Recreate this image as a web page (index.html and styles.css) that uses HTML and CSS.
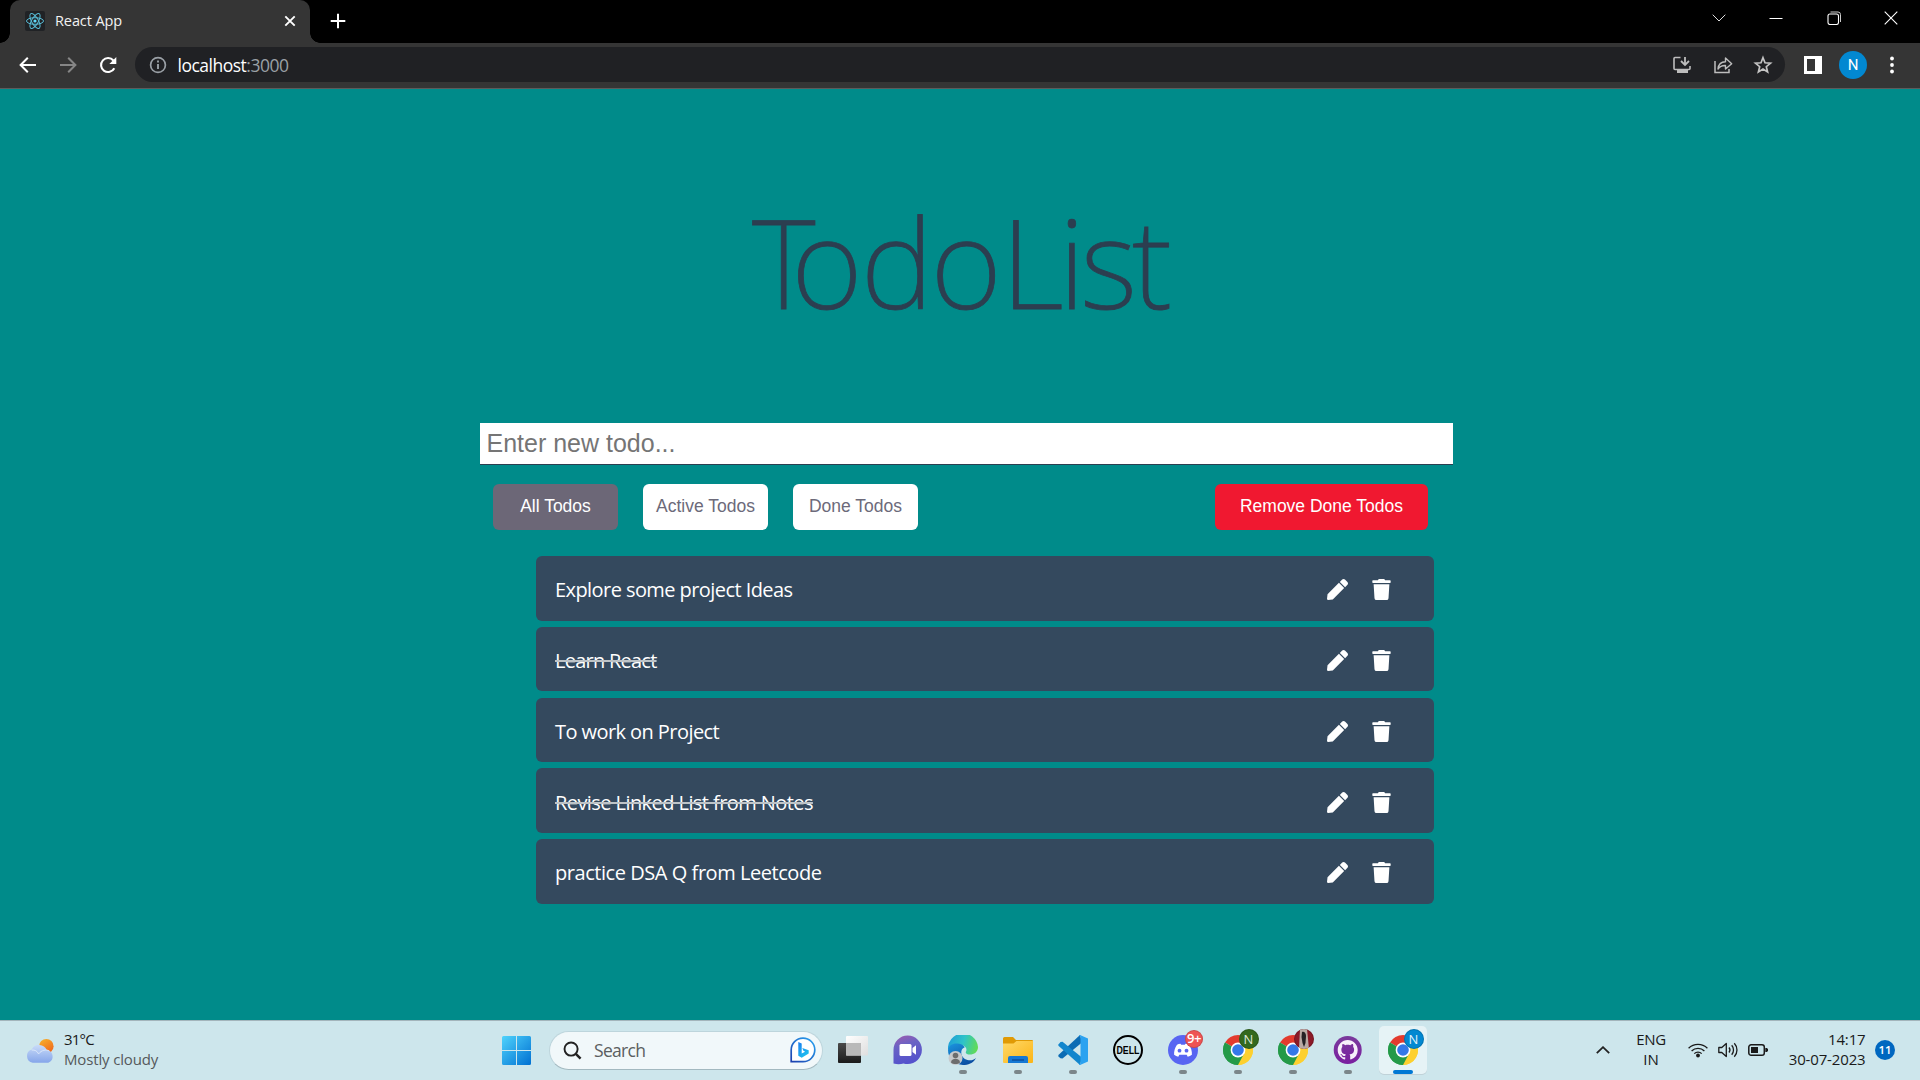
FILE: index.html
```html
<!DOCTYPE html>
<html lang="en">
<head>
<meta charset="utf-8">
<title>React App</title>
<link rel="stylesheet" href="styles.css">
</head>
<body>
<svg width="0" height="0" class="defs" aria-hidden="true">
  <defs>
    <linearGradient id="win" x1="0" y1="0" x2="1" y2="1"><stop offset="0" stop-color="#4fd3fc"/><stop offset="1" stop-color="#0070d2"/></linearGradient>
    <linearGradient id="bing" x1="0" y1="1" x2="1" y2="0"><stop offset="0" stop-color="#1b3fae"/><stop offset="1" stop-color="#2aa5f2"/></linearGradient>
    <linearGradient id="bingb" x1="0" y1="0" x2="0.6" y2="1"><stop offset="0" stop-color="#1b7df0"/><stop offset="1" stop-color="#1ec0ef"/></linearGradient>
    <linearGradient id="sun" x1="0" y1="0" x2="0.6" y2="1"><stop offset="0" stop-color="#f7b52c"/><stop offset="1" stop-color="#f06a1c"/></linearGradient>
    <linearGradient id="cloud" x1="0" y1="0" x2="0" y2="1"><stop offset="0" stop-color="#c9dbf8"/><stop offset="1" stop-color="#86a6ea"/></linearGradient>
    <linearGradient id="meet" x1="0" y1="0" x2="0.3" y2="1"><stop offset="0" stop-color="#a05cae"/><stop offset="0.4" stop-color="#6a62c4"/><stop offset="1" stop-color="#5552cc"/></linearGradient>
    <linearGradient id="edgeA" x1="0" y1="0.4" x2="1" y2="0.6"><stop offset="0" stop-color="#1e9fd8"/><stop offset="0.5" stop-color="#2fc3c8"/><stop offset="1" stop-color="#62dc52"/></linearGradient>
    <linearGradient id="edgeB" x1="0" y1="0" x2="0.6" y2="1"><stop offset="0" stop-color="#1b95df"/><stop offset="1" stop-color="#0c4fa3"/></linearGradient>
    <linearGradient id="folder" x1="0" y1="0" x2="1" y2="1"><stop offset="0" stop-color="#ffd968"/><stop offset="1" stop-color="#fbb416"/></linearGradient>
    <linearGradient id="dark" x1="0" y1="0" x2="0" y2="1"><stop offset="0" stop-color="#4a4a4a"/><stop offset="1" stop-color="#1b1b1b"/></linearGradient>
    <linearGradient id="pale" x1="0" y1="0" x2="1" y2="1"><stop offset="0" stop-color="#ffffff"/><stop offset="1" stop-color="#dedede"/></linearGradient>
    <linearGradient id="gh" x1="0" y1="0" x2="0" y2="1"><stop offset="0" stop-color="#7a3a9c"/><stop offset="1" stop-color="#7a1fa0"/></linearGradient>
    <symbol id="pen" viewBox="0 0 512 512"><path d="M290.74 93.24l128.02 128.02-277.99 277.99-114.14 12.6C11.35 513.54-1.56 500.62.14 485.34l12.7-114.22 277.9-277.88zm207.2-19.06l-60.11-60.11c-18.75-18.75-49.16-18.75-67.91 0l-56.55 56.55 128.02 128.02 56.55-56.55c18.75-18.76 18.75-49.16 0-67.91z"/></symbol>
    <symbol id="trash" viewBox="0 0 448 512"><path d="M432 32H312l-9.4-18.7A24 24 0 0 0 281.1 0H166.8a23.72 23.72 0 0 0-21.4 13.3L136 32H16A16 16 0 0 0 0 48v32a16 16 0 0 0 16 16h416a16 16 0 0 0 16-16V48a16 16 0 0 0-16-16zM53.2 467a48 48 0 0 0 47.9 45h245.8a48 48 0 0 0 47.9-45L416 128H32z"/></symbol>
    <symbol id="chrome" viewBox="0 0 30 30">
      <path d="M15 15L2.01 7.5A15 15 0 0 1 27.99 7.5Z" fill="#e33b2e"/>
      <path d="M15 15L27.99 7.5A15 15 0 0 1 15 30L15 15Z" fill="#fdd02f"/>
      <path d="M15 15L15 30A15 15 0 0 1 2.01 7.5Z" fill="#249a48"/>
      <path d="M15 8H28.3A15 15 0 0 1 15 30L21.1 18.5Z" fill="#fdd02f"/>
      <path d="M2.01 7.5L8.9 18.5L15 22L21.1 18.5L15 30A15 15 0 0 1 2.01 7.5Z" fill="#249a48"/>
      <circle cx="15" cy="15" r="7.4" fill="#fff"/><circle cx="15" cy="15" r="5.8" fill="#3478e8"/>
    </symbol>
  </defs>
</svg>

<div class="screen">
  <header class="tabstrip">
    <div class="tab">
      <svg class="favicon" viewBox="0 0 20 20"><rect width="20" height="20" rx="2" fill="#202225"/><g fill="none" stroke="#58bcd6" stroke-width="1"><ellipse cx="10" cy="10" rx="8.5" ry="3.3"/><ellipse cx="10" cy="10" rx="8.5" ry="3.3" transform="rotate(60 10 10)"/><ellipse cx="10" cy="10" rx="8.5" ry="3.3" transform="rotate(120 10 10)"/></g><circle cx="10" cy="10" r="1.6" fill="#61dafb"/></svg>
      <span class="tab-title">React App</span>
      <svg class="tab-close" viewBox="0 0 12 12"><path d="M1.3 1.3l9.4 9.4M10.7 1.3L1.3 10.7" stroke="#fff" stroke-width="1.9"/></svg>
    </div>
    <svg class="new-tab" viewBox="0 0 16 16"><path d="M8 .7v14.6M.7 8h14.6" stroke="#fff" stroke-width="2"/></svg>
    <div class="window-controls">
      <svg viewBox="0 0 14 14"><path d="M.7 3.7L7 10l6.300-6.300" fill="none" stroke="#ddd" stroke-width="1"/></svg>
      <svg viewBox="0 0 14 14"><path d="M.5 7.500h13" stroke="#fff"/></svg>
      <svg viewBox="0 0 14 14"><rect x="1" y="3" width="10.500" height="10.500" rx="2" fill="none" stroke="#fff" stroke-width="1.100"/><path d="M3.500 1h7.500a2.500 2.500 0 0 1 2.500 2.500V11" fill="none" stroke="#ccc"/></svg>
      <svg viewBox="0 0 14 14"><path d="M.7 .7l12.600 12.600M13.300 .7L.7 13.300" stroke="#fff" stroke-width="1.100"/></svg>
    </div>
  </header>

  <nav class="toolbar">
    <div class="nav-buttons">
      <svg viewBox="0 0 20 20"><path d="M18 10H3M9.800 2.800L2.600 10l7.200 7.200" fill="none" stroke="#fff" stroke-width="2"/></svg>
      <svg viewBox="0 0 20 20"><path d="M2 10h15M10.200 2.800l7.200 7.200-7.200 7.200" fill="none" stroke="#868686" stroke-width="2"/></svg>
      <svg viewBox="0 0 20 20"><path d="M16.300 13.200A7 7 0 1 1 15.400 5.500" fill="none" stroke="#fff" stroke-width="2.100"/><path d="M18.300 2v7h-7z" fill="#fff"/></svg>
    </div>
    <div class="omnibox">
      <svg class="info" viewBox="0 0 18 18"><circle cx="9" cy="9" r="7.400" fill="none" stroke="#9aa0a6" stroke-width="1.700"/><path d="M9 8v5M9 4.600v1.900" stroke="#9aa0a6" stroke-width="1.900"/></svg>
      <span class="url">localhost<span class="port">:3000</span></span>
      <div class="omni-actions">
        <svg viewBox="0 0 20 20"><path d="M8.500 2.500H3a1 1 0 0 0-1 1v10a1 1 0 0 0 1 1h14a1 1 0 0 0 1-1V11" fill="none" stroke="#bdbdbd" stroke-width="1.600"/><path d="M5 14.500h11V18H5z" fill="#bdbdbd"/><path d="M13 2v7.500M9 6l4 4 4-4" fill="none" stroke="#bdbdbd" stroke-width="1.800"/></svg>
        <svg viewBox="0 0 20 20"><path d="M2 6v11.500h14V14" fill="none" stroke="#bdbdbd" stroke-width="1.500"/><path d="M5 14c.4-4.500 2.800-7 7.500-7.200V3l6.200 5.700-6.200 5.300v-3.500C9 10.300 6.800 11.500 5 14z" fill="none" stroke="#bdbdbd" stroke-width="1.400" stroke-linejoin="round"/></svg>
        <svg viewBox="0 0 20 20"><path d="M10 2.700l2 5.100 5.500.4-4.200 3.500 1.300 5.300L10 14.100 5.400 17l1.300-5.300-4.200-3.500 5.500-.4z" fill="none" stroke="#c4c4c4" stroke-width="1.700"/></svg>
      </div>
    </div>
    <svg class="side-panel" viewBox="0 0 18 18"><path fill-rule="evenodd" d="M0 0h18v18H0zM3 3v12h8V3z" fill="#fff"/></svg>
    <div class="profile">N</div>
    <svg class="menu" viewBox="0 0 4 18"><circle cx="2" cy="2.500" r="1.900" fill="#fff"/><circle cx="2" cy="9" r="1.900" fill="#fff"/><circle cx="2" cy="15.500" r="1.900" fill="#fff"/></svg>
  </nav>

  <main class="app">
    <h1 class="title"><span class="kern-t">T</span><span class="kern-o">o</span><span class="kern-d">d</span><span class="kern-o2">o</span>List</h1>
    <input class="new-todo" type="text" placeholder="Enter new todo...">
    <div class="filters">
      <button class="filter filter-on">All Todos</button>
      <button class="filter">Active Todos</button>
      <button class="filter">Done Todos</button>
      <button class="remove">Remove Done Todos</button>
    </div>
    <ul class="todos">
      <li class="todo"><span class="label">Explore some project Ideas</span><svg class="pen"><use href="#pen"/></svg><svg class="trash"><use href="#trash"/></svg></li>
      <li class="todo"><span class="label label-tight done">Learn React</span><svg class="pen"><use href="#pen"/></svg><svg class="trash"><use href="#trash"/></svg></li>
      <li class="todo"><span class="label">To work on Project</span><svg class="pen"><use href="#pen"/></svg><svg class="trash"><use href="#trash"/></svg></li>
      <li class="todo"><span class="label done">Revise Linked List from Notes</span><svg class="pen"><use href="#pen"/></svg><svg class="trash"><use href="#trash"/></svg></li>
      <li class="todo"><span class="label label-wide">practice DSA Q from Leetcode</span><svg class="pen"><use href="#pen"/></svg><svg class="trash"><use href="#trash"/></svg></li>
    </ul>
  </main>

  <footer class="taskbar">
    <div class="weather">
      <svg viewBox="0 0 32 26"><circle cx="22" cy="8" r="7.500" fill="url(#sun)"/><path d="M8 25a7 7 0 0 1-1-13.600A8.500 8.500 0 0 1 22.500 12 6.700 6.700 0 0 1 24 25z" fill="url(#cloud)"/><path d="M7 12a7 7 0 0 1 7 4M14 16c3-4 8-5 11-3" fill="none" stroke="#dbe7fb" stroke-width="1"/></svg>
      <div class="weather-text"><span class="temp">31°C</span><span class="sky">Mostly cloudy</span></div>
    </div>
    <svg class="start" viewBox="0 0 29 29"><path d="M1.500 0H14v14H0V1.500A1.500 1.500 0 0 1 1.500 0zM15 0h12.500A1.500 1.500 0 0 1 29 1.500V14H15zM0 15h14v14H1.500A1.500 1.500 0 0 1 0 27.500zM15 15h14v12.500a1.500 1.500 0 0 1-1.500 1.500H15z" fill="url(#win)"/></svg>
    <div class="search">
      <svg class="glass" viewBox="0 0 20 20"><circle cx="8.500" cy="8.500" r="6.900" fill="none" stroke="#222" stroke-width="2"/><path d="M13.500 13.500l5 5" stroke="#222" stroke-width="2.600"/></svg>
      <span class="search-text">Search</span>
      <svg class="bing" viewBox="0 0 26 26"><path d="M1.200 24.700V13A11.800 11.800 0 1 1 13 24.700z" fill="#fff" stroke="url(#bing)" stroke-width="1.700"/><path d="M8.300 5l3.400 1.400v10.200l3.400-1.900-1.700-.9-1.100-2.800 6.400 2.300v3.200l-7 4.300-3.400-2z" fill="url(#bingb)"/></svg>
    </div>
    <div class="apps">
      <div class="slot"><svg viewBox="0 0 30 30"><rect x="0" y="8" width="23" height="20" rx="1" fill="url(#dark)"/><rect x="8" y="1" width="22" height="19.500" rx="1" fill="url(#pale)"/><rect x="8" y="8" width="15" height="12.500" fill="#b9b9b9"/></svg></div>
      <div class="slot"><svg viewBox="0 0 30 30"><path d="M.5 28.500V15A14.200 14.200 0 1 1 14.500 29a14 14 0 0 1-4-.6c-3 .9-6 1-10 .1z" fill="url(#meet)"/><rect x="6.500" y="9" width="12" height="12" rx="1.500" fill="#fff"/><path d="M19.500 13l3.500-2.800v9.600L19.500 17z" fill="#fff"/></svg></div>
      <div class="slot running"><svg viewBox="0 0 30 30"><path d="M0 15A15 15 0 0 1 30 12c0 5-4 7.500-8 7.500-3 0-5-1.200-4-3 1.500-3-1-6-5-6.500C7 9.500 3 12 0 15z" fill="url(#edgeA)"/><path d="M0 15c1-5 5-7 9.500-6.500C15 9 17 12 16.500 12.500c-4.500 1-5 10.500 3 12.500 3 .8 6 .2 8.500-2C25 28.500 20 30 15 30A15 15 0 0 1 0 15z" fill="url(#edgeB)"/><circle cx="7.500" cy="23" r="7" fill="#c6c9cc"/><circle cx="7.500" cy="20.500" r="2.800" fill="#6d6d6d"/><path d="M3 27.500c0-5 9-5 9 0-2 2-7 2-9 0z" fill="#6d6d6d"/></svg></div>
      <div class="slot running"><svg viewBox="0 0 30 30"><path d="M0 3.500A1.500 1.500 0 0 1 1.500 2H10l3 3h16a1 1 0 0 1 1 1v5H0z" fill="#e09a05"/><path d="M0 8.500h10.500L13.500 6H30v21a1 1 0 0 1-1 1H1a1 1 0 0 1-1-1z" fill="url(#folder)"/><path d="M5 28v-5a2 2 0 0 1 2-2h16a2 2 0 0 1 2 2v5z" fill="#1578d4"/><path d="M9 25h12" stroke="#0b4a94" stroke-width="1.300"/></svg></div>
      <div class="slot running"><svg viewBox="0 0 30 30"><path d="M22 0l2 7.500L4.500 23.500 2.500 23.300 .4 21.400V20z" fill="#0c6cb4"/><path d="M.4 9.500L2.500 7l2-.2L24 22.500 22 30 .4 10.800z" fill="#1286cd"/><path d="M22 0l8 3.500v23L22 30c-.5 0-1-.5-1-1l1.500-.5v-27L21 1c0-.5.500-1 1-1z" fill="#2ba2f0"/></svg></div>
      <div class="slot"><svg viewBox="0 0 30 30"><circle cx="15" cy="15" r="14" fill="none" stroke="#000" stroke-width="2"/><text x="15" y="18.500" class="dell" text-anchor="middle" textLength="23" lengthAdjust="spacingAndGlyphs">DELL</text></svg></div>
      <div class="slot running"><svg viewBox="0 0 30 30"><circle cx="15" cy="15" r="15" fill="#5865f2"/><path d="M9 9.700c1-.5 2.200-.9 3.500-1l.7 1.100h3.600l.7-1.100c1.300.1 2.500.500 3.500 1 2 3 3.200 6.500 2.900 10-1.300 1-2.700 1.700-4.200 2l-1-1.900h-7.400l-1 1.900c-1.500-.3-2.900-1-4.200-2-.3-3.500.9-7 2.900-10z" fill="#fff"/><circle cx="11.500" cy="15.700" r="1.900" fill="#5865f2"/><circle cx="18.500" cy="15.700" r="1.900" fill="#5865f2"/></svg><span class="badge red">9+</span></div>
      <div class="slot running"><svg><use href="#chrome"/></svg><span class="badge green">N</span></div>
      <div class="slot running"><svg><use href="#chrome"/></svg><span class="badge photo"><svg viewBox="0 0 20 20"><path d="M6 0h7l2 20H5z" fill="#b9aaa4"/><path d="M8 3c2-1 4 1 4 4l-.5 7L10 18 8.500 14 7.500 8z" fill="#242225"/></svg></span></div>
      <div class="slot running"><svg viewBox="0 0 30 30"><circle cx="14.700" cy="15" r="14" fill="url(#gh)"/><path transform="translate(4.700 5) scale(1.250)" fill="#f7f0fa" d="M8 0C3.580 0 0 3.580 0 8c0 3.540 2.290 6.530 5.470 7.590.4.070.55-.17.55-.38 0-.19-.01-.82-.01-1.490-2.010.37-2.530-.49-2.690-.94-.09-.23-.48-.94-.82-1.130-.28-.15-.68-.52-.01-.53.63-.01 1.080.58 1.230.82.72 1.210 1.870.87 2.330.66.070-.52.28-.87.51-1.070-1.780-.2-3.640-.89-3.640-3.950 0-.87.310-1.590.82-2.150-.08-.2-.36-1.020.08-2.120 0 0 .67-.21 2.200.82.64-.18 1.320-.27 2-.27s1.360.09 2 .27c1.530-1.040 2.200-.82 2.200-.82.440 1.100.160 1.920.080 2.120.51.56.82 1.270.82 2.150 0 3.070-1.870 3.750-3.650 3.950.290.250.540.730.540 1.480 0 1.070-.01 1.930-.01 2.200 0 .21.150.46.550.38A8.010 8.010 0 0 0 16 8c0-4.420-3.580-8-8-8z"/></svg></div>
      <div class="slot running current"><svg><use href="#chrome"/></svg><span class="badge blue">N</span></div>
    </div>
    <div class="tray">
      <svg class="chevron" viewBox="0 0 14 8"><path d="M.8 7.200L7 1.200l6.200 6" fill="none" stroke="#222" stroke-width="1.800"/></svg>
      <div class="lang"><span class="eng">ENG</span><span>IN</span></div>
      <svg class="wifi" viewBox="0 0 20 16"><g fill="none" stroke="#1a1a1a" stroke-width="1.300"><path d="M.6 6.200a13.300 13.300 0 0 1 18.800 0"/><path d="M3.600 9a9 9 0 0 1 12.800 0"/><path d="M6.300 11.600a5.300 5.300 0 0 1 7.400 0"/></g><circle cx="10" cy="13.500" r="1.900" fill="#1a1a1a"/></svg>
      <svg class="volume" viewBox="0 0 20 16"><g fill="none" stroke="#1a1a1a" stroke-width="1.300"><path d="M.8 5.500h3L8.300 1.500v13l-4.500-4h-3z" stroke-linejoin="round"/><path d="M11 5.500a4 4 0 0 1 0 5M13.700 3.300a7 7 0 0 1 0 9.400M16.300 1.200a10 10 0 0 1 0 13.600"/></g></svg>
      <svg class="battery" viewBox="0 0 20 12"><rect x=".8" y=".8" width="15.500" height="10.400" rx="2.300" fill="none" stroke="#1a1a1a" stroke-width="1.500"/><rect x="3" y="3" width="7" height="6" fill="#1a1a1a"/><path d="M17.300 4h1.500l1.200 1v2l-1.200 1h-1.500z" fill="#1a1a1a"/></svg>
      <div class="clock"><span class="time">14:17</span><span class="date">30-07-2023</span></div>
      <div class="notices">11</div>
    </div>
  </footer>
</div>
</body>
</html>
```
FILE: styles.css
```css
* { box-sizing: border-box; }
body { margin: 0; background: #008b8a; overflow: hidden; font-family: "Open Sans", "Noto Sans", sans-serif; }
.defs { position: absolute; }
svg { display: block; flex: none; }
.screen { width: 1920px; height: 1080px; display: flex; flex-direction: column; }
span { white-space: nowrap; }

.tabstrip { height: 43px; flex: none; background: #000; display: flex; padding-left: 10px; }
.tab { position: relative; width: 300px; height: 43px; background: #353535; border-radius: 10px 10px 0 0; display: flex; align-items: center; padding: 0 15px 2px; }
.tab::before, .tab::after { content: ""; position: absolute; bottom: 0; width: 10px; height: 10px; }
.tab::before { left: -10px; background: radial-gradient(circle at 0 0, transparent 9.5px, #353535 10px); }
.tab::after { right: -10px; background: radial-gradient(circle at 100% 0, transparent 9.5px, #353535 10px); }
.favicon { width: 20px; height: 20px; }
.tab-title { margin-left: 10px; flex: 1; color: #f2f2f2; font-size: 14.500px; letter-spacing: -0.1px; line-height: 20px; }
.tab-close { width: 12px; height: 12px; margin-right: -1px; }
.new-tab { width: 16px; height: 16px; margin: 13px 0 0 19.500px; }
.window-controls { margin: 11px 22px 0 auto; display: flex; gap: 43.300px; }
.window-controls svg { width: 14px; height: 14px; }

.toolbar { height: 46px; flex: none; background: #353535; border-bottom: 1px solid #5c5c5c; display: flex; align-items: center; padding: 0 26px 2px 17.500px; }
.nav-buttons { display: flex; gap: 20px; width: 117.500px; }
.nav-buttons svg { width: 20px; height: 20px; }
.omnibox { width: 1650px; height: 35px; border-radius: 18px; background: #202124; display: flex; align-items: center; padding: 0 12px 0 13.500px; }
.info { width: 18px; height: 18px; }
.url { margin-left: 11px; color: #fff; font-size: 17.500px; letter-spacing: -0.5px; line-height: 24px; }
.port { color: #9aa0a6; }
.omni-actions { margin-left: auto; display: flex; gap: 20.300px; }
.omni-actions svg { width: 20px; height: 20px; }
.side-panel { width: 18px; height: 18px; margin-left: 18.500px; }
.profile { width: 28px; height: 28px; margin-left: 17.500px; border-radius: 50%; background: #0288d1; color: #fff; font: 15px/28px Roboto, sans-serif; text-align: center; }
.menu { width: 4px; height: 18px; margin-left: auto; }

.app { flex: 1; min-height: 0; padding-left: 480px; background: #008b8a; }
.title { margin: 89px 0 0 272px; height: 245px; font-family: "Noto Sans", "Open Sans", sans-serif; font-size: 123px; line-height: 168px; font-weight: 200; color: #2c3e50; -webkit-text-stroke: 0.8px #2c3e50; letter-spacing: -5px; white-space: nowrap; }
.kern-t { letter-spacing: -24px; }
.kern-o { letter-spacing: -2px; }
.kern-d { letter-spacing: -3px; }
.kern-o2 { letter-spacing: -1px; }
.new-todo { display: block; width: 973px; height: 42px; padding: 0 6.500px 1px; border: 0; border-bottom: 1px solid #2c3e50; background: #fff; font: 25px "Liberation Sans", Arial, sans-serif; outline: 0; border-radius: 0; }
.new-todo::placeholder { color: #757575; }
.filters { display: flex; gap: 25px; width: 948px; padding-left: 13px; margin-top: 19px; }
.filter, .remove { height: 46px; border: 0; border-radius: 6px; padding: 0 0 1px; font: 17.500px "Liberation Sans", Arial, sans-serif; }
.filter { width: 125px; background: #fff; color: #6c6a7a; }
.filter-on { background: #6c6777; color: #fff; }
.remove { width: 213px; margin-left: auto; background: #f01830; color: #fff; }
.todos { list-style: none; width: 898px; margin: 26px 0 0 56px; padding: 0; display: flex; flex-direction: column; gap: 6.250px; }
.todo { height: 64.500px; border-radius: 6px; background: #34495e; color: #fff; display: flex; align-items: center; padding: 4px 43px 0 19px; }
.todo svg { fill: #fff; margin-top: -1px; }
.label { font-size: 20px; line-height: 28px; letter-spacing: -0.570px; }
.label-wide { letter-spacing: -0.450px; }
.label-tight { letter-spacing: -0.750px; }
.done { text-decoration: line-through; text-decoration-color: #bdc3c7; text-decoration-thickness: 2px; }
.pen { width: 21px; height: 21px; margin-left: auto; }
.trash { width: 19px; height: 21px; margin-left: 24px; }

.taskbar { height: 60px; flex: none; background: #cde6ec; border-top: 1px solid #a3b5bc; display: flex; color: #1a1a1a; font-size: 15px; }
.weather { width: 502px; padding: 8px 0 0 25px; display: flex; gap: 8px; }
.weather svg { width: 31px; height: 26px; margin-top: 9px; }
.weather-text, .lang, .clock { display: flex; flex-direction: column; line-height: 20px; }
.temp { letter-spacing: -0.8px; }
.sky { color: #55595b; letter-spacing: -0.15px; }
.start { width: 29px; height: 29px; margin-top: 15px; }
.search { width: 274px; height: 39px; margin: 10px 0 0 18px; border-radius: 20px; border: 1px solid #bdd5dc; border-bottom-color: #a3b9c0; background: #f1f8fa; display: flex; align-items: center; padding: 0 6px 1px 13px; }
.glass { width: 19px; height: 19px; }
.search-text { margin-left: 12px; color: #5b5f61; font-size: 17.500px; letter-spacing: -0.7px; }
.bing { width: 26px; height: 26px; margin-left: auto; }
.apps { display: flex; margin-left: 2.500px; }
.slot { position: relative; width: 55px; height: 59px; padding: 14px 12.500px 0; }
.slot > svg { width: 30px; height: 30px; position: relative; }
.running::after { content: ""; position: absolute; left: 23.500px; top: 49px; width: 8px; height: 4px; border-radius: 2px; background: #7b868a; }
.current::before { content: ""; position: absolute; left: 3.500px; top: 5px; width: 48px; height: 48px; border-radius: 5px; background: #e6f3f6; box-shadow: 0 1px 0 #c0d2d8; }
.current::after { left: 17.500px; width: 20px; background: #0078d4; }
.badge { position: absolute; left: 28px; top: 8px; width: 20px; height: 20px; border-radius: 50%; overflow: hidden; color: #fff; text-align: center; font: 13px/20px "Open Sans", sans-serif; box-shadow: inset 0 0 0 1px rgba(0,0,0,.15); }
.red { background: #ee5454; font-weight: 600; left: 29.500px; width: 18px; height: 18px; line-height: 17px; top: 9px; letter-spacing: -.5px; }
.green { background: #33691e; color: #dfe8da; }
.blue { background: #0288d1; color: #e3f3fb; }
.photo { background: #8b1a28; }
.dell { font: 700 10px "Liberation Sans", Arial, sans-serif; }
.tray { margin-left: auto; display: flex; padding-right: 25px; }
.chevron { width: 14px; height: 8px; margin-top: 25px; }
.lang { width: 41px; margin: 8px 0 0 20.500px; text-align: center; align-items: center; }
.eng { letter-spacing: -0.4px; }
.wifi { width: 20px; height: 16px; margin: 21px 0 0 16.500px; }
.volume { width: 20px; height: 16px; margin: 21px 0 0 10px; }
.battery { width: 20px; height: 12px; margin: 23px 0 0 10px; }
.clock { margin: 8px 0 0 17.500px; width: 80px; align-items: flex-end; letter-spacing: -0.150px; }
.notices { width: 20px; height: 20px; margin: 19px 0 0 9.500px; border-radius: 50%; background: #0067c0; color: #fff; font-size: 11.500px; line-height: 20px; font-weight: 600; text-align: center; }
```
